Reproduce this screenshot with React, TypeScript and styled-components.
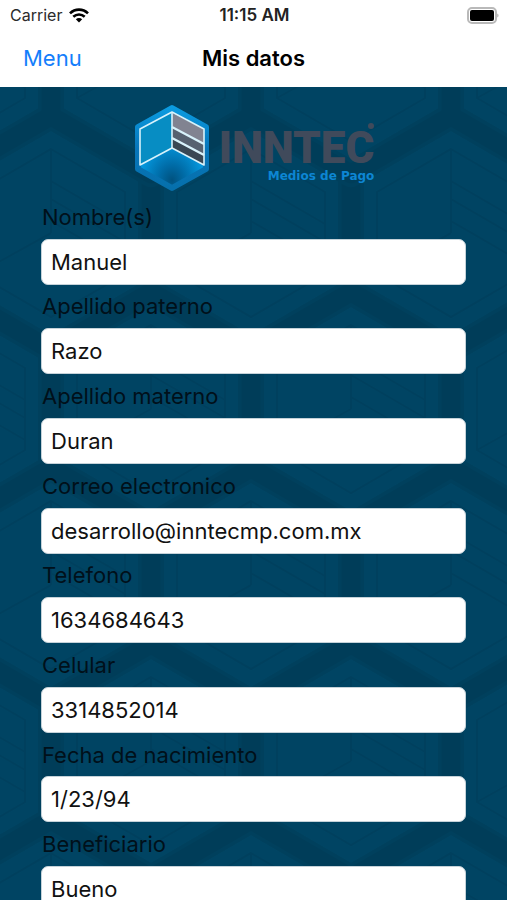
import React, { useId } from "react";
import styled, { createGlobalStyle } from "styled-components";

const Global = createGlobalStyle`
  *, *::before, *::after { box-sizing: border-box; }
  body {
    margin: 0;
    background: #fff;
    color: #000;
    font-family: Inter, "Liberation Sans", sans-serif;
  }
`;

const Screen = styled.div`
  display: flex;
  flex-direction: column;
  height: 100vh;
  overflow: hidden;
`;

const StatusBar = styled.div`
  display: grid;
  grid-template-columns: 1fr auto 1fr;
  align-items: center;
  height: 30px;
  padding: 0 8px 0 10px;
  font-size: 16px;
  line-height: 20px;
`;

const Carrier = styled.span`
  display: flex;
  align-items: center;
  gap: 7px;
  color: #2b2b2b;
`;

const Clock = styled.time`
  color: #222;
  font-size: 17px;
  font-weight: 600;
`;

const BatteryIcon = styled.svg`
  justify-self: end;
`;

const NavBar = styled.header`
  display: grid;
  grid-template-columns: 1fr auto 1fr;
  align-items: center;
  height: 57px;
  padding: 0 23px 2px;
`;

const MenuButton = styled.button`
  justify-self: start;
  padding: 0;
  border: 0;
  background: none;
  color: #147efb;
  font: inherit;
  font-size: 22px;
  line-height: 28px;
  cursor: pointer;
`;

const Title = styled.h1`
  margin: 0;
  font-size: 22px;
  font-weight: 600;
  line-height: 28px;
`;

const Body = styled.main`
  position: relative;
  flex: 1;
  min-height: 0;
  background: #004463;
  overflow: hidden;
`;

const Backdrop = styled.svg`
  position: absolute;
  inset: 0;
  width: 100%;
  height: 100%;
`;

const Scroller = styled.div`
  position: relative;
  height: 100%;
  padding: 17px 41px 24px;
  overflow-y: auto;
  scrollbar-width: none;
`;

const Brand = styled.div`
  display: flex;
  justify-content: center;
  gap: 8px;
  height: 91px;
`;

const BrandText = styled.div`
  display: flex;
  flex-direction: column;
  padding-top: 22px;
`;

const BrandName = styled.span`
  position: relative;
  color: #404a5b;
  font-family: Roboto, sans-serif;
  font-size: 44px;
  font-weight: 900;
  line-height: 44px;
`;

const Registered = styled.span`
  position: absolute;
  top: -3px;
  right: 0;
  width: 6px;
  height: 6px;
  border-radius: 50%;
  background: #404a5b;
`;

const BrandTagline = styled.span`
  align-self: flex-end;
  color: #0d86d3;
  font-family: "DejaVu Sans", sans-serif;
  font-size: 12px;
  font-weight: 700;
  line-height: 12px;
`;

const Form = styled.form`
  display: grid;
  grid-auto-rows: 1fr;
  min-height: 717px;
`;

const Field = styled.div`
  display: flex;
  flex-direction: column;
`;

const Label = styled.label`
  display: flex;
  flex: 1;
  align-items: center;
  padding-left: 1px;
  color: #00101a;
  font-size: 22px;
  line-height: 28px;
`;

const TextInput = styled.input`
  width: 100%;
  height: 46px;
  padding: 0 9px;
  border: 1px solid #c5d2d9;
  border-radius: 7px;
  background: #fff;
  color: #111;
  font: inherit;
  font-size: 22px;
`;

const fields = [
  { label: "Nombre(s)", value: "Manuel", type: "text" },
  { label: "Apellido paterno", value: "Razo", type: "text" },
  { label: "Apellido materno", value: "Duran", type: "text" },
  { label: "Correo electronico", value: "desarrollo@inntecmp.com.mx", type: "email" },
  { label: "Telefono", value: "1634684643", type: "tel" },
  { label: "Celular", value: "3314852014", type: "tel" },
  { label: "Fecha de nacimiento", value: "1/23/94", type: "text" },
  { label: "Beneficiario", value: "Bueno", type: "text" },
];

function Wifi() {
  return (
    <svg width="20" height="15" viewBox="0 0 20 15" aria-hidden="true">
      <g fill="none" stroke="#000" strokeWidth="2.6">
        <path d="M1 5.4C6 .4 14 .4 19 5.4" />
        <path d="M4.3 8.8c3.3-3.1 8.1-3.1 11.4 0" />
      </g>
      <path d="M6.8 11.3c1.9-1.7 4.5-1.7 6.4 0L10 14.6z" />
    </svg>
  );
}

function Battery() {
  return (
    <BatteryIcon width="32" height="17" viewBox="0 0 32 17" role="img" aria-label="Battery full">
      <rect x="1" y="1" width="28" height="15" rx="4" fill="#fff" stroke="#b9b9b9" strokeWidth="2" />
      <rect x="3" y="3" width="24" height="11" rx="2" fill="#000" />
      <path d="M30.3 6.5v4c1.6-.6 1.6-3.4 0-4z" fill="#aaa" />
    </BatteryIcon>
  );
}

function HexBackdrop() {
  const id = useId();
  const outline = "M0-117 100-59V59L0 117-100 59V-59Z";
  const cell = (x: number, y: number) => (
    <g key={`${x}-${y}`} transform={`translate(${x} ${y})`}>
      <path d={outline} stroke="#00405d" strokeWidth="26" strokeLinejoin="round" />
      <path d={outline} stroke="#003d59" strokeWidth="19" strokeLinejoin="round" />
      <path d="M0-84 74-41V41L0 84-74 41V-41Z" stroke="#00405e" strokeWidth="2" />
      <path d="M0-84V0M0-52 74-9M0-34 74 9M0-12 74 31M0 0-74 41" stroke="#00405e" strokeWidth="2" />
    </g>
  );
  return (
    <Backdrop aria-hidden="true">
      <defs>
        <pattern id={id} width="200" height="352" patternUnits="userSpaceOnUse" patternTransform="translate(51 146)">
          <g fill="none">
            {[0, 200].map((x) => [0, 352].map((y) => cell(x, y)))}
            {cell(100, 176)}
          </g>
        </pattern>
      </defs>
      <rect width="100%" height="100%" fill={`url(#${id})`} />
    </Backdrop>
  );
}

function HexLogo() {
  const id = useId();
  return (
    <svg width="78" height="88" viewBox="0 0 78 88" aria-hidden="true">
      <defs>
        <linearGradient id={`${id}e`} x1="0" y1="0" x2="0" y2="1">
          <stop offset="0" stopColor="#0b9be0" />
          <stop offset=".5" stopColor="#0776bb" />
          <stop offset="1" stopColor="#0670ac" />
        </linearGradient>
        <radialGradient id={`${id}g`} cx=".5" cy=".9" r=".46">
          <stop offset="0" stopColor="#00527f" />
          <stop offset=".4" stopColor="#006ba6" />
          <stop offset="1" stopColor="#0496dc" />
        </radialGradient>
      </defs>
      <path
        d="M39 4 73 23V65L39 84 5 65V23Z"
        fill={`url(#${id}g)`}
        stroke={`url(#${id}e)`}
        strokeWidth="6"
        strokeLinejoin="round"
      />
      <path d="M39 9V44L7 61V25Z" fill="#078dc3" />
      <path d="M39 9 71 25V61L39 44Z" fill="#394754" />
      <path d="M39 9 71 25V40L39 22Z" fill="#818391" />
      <path d="M39 23 71 41V51L39 35Z" fill="#566170" />
      <g fill="none" stroke="#d8f2fb" strokeWidth="1.6" strokeLinejoin="round">
        <path d="M39 8 7 25V61L39 44 71 61V25Z" />
        <path d="M39 8V44" />
        <path d="M39 23 71 40M39 34 71 51" strokeWidth="2.2" />
      </g>
    </svg>
  );
}

export default function App() {
  const formId = useId();
  return (
    <Screen>
      <Global />
      <StatusBar>
        <Carrier>
          Carrier
          <Wifi />
        </Carrier>
        <Clock>11:15 AM</Clock>
        <Battery />
      </StatusBar>
      <NavBar>
        <MenuButton type="button">Menu</MenuButton>
        <Title>Mis datos</Title>
      </NavBar>
      <Body>
        <HexBackdrop />
        <Scroller>
          <Brand>
            <HexLogo />
            <BrandText>
              <BrandName>
                INNTEC
                <Registered />
              </BrandName>
              <BrandTagline>Medios de Pago</BrandTagline>
            </BrandText>
          </Brand>
          <Form>
            {fields.map((f, i) => (
              <Field key={f.label}>
                <Label htmlFor={`${formId}-${i}`}>{f.label}</Label>
                <TextInput id={`${formId}-${i}`} type={f.type} defaultValue={f.value} />
              </Field>
            ))}
          </Form>
        </Scroller>
      </Body>
    </Screen>
  );
}
